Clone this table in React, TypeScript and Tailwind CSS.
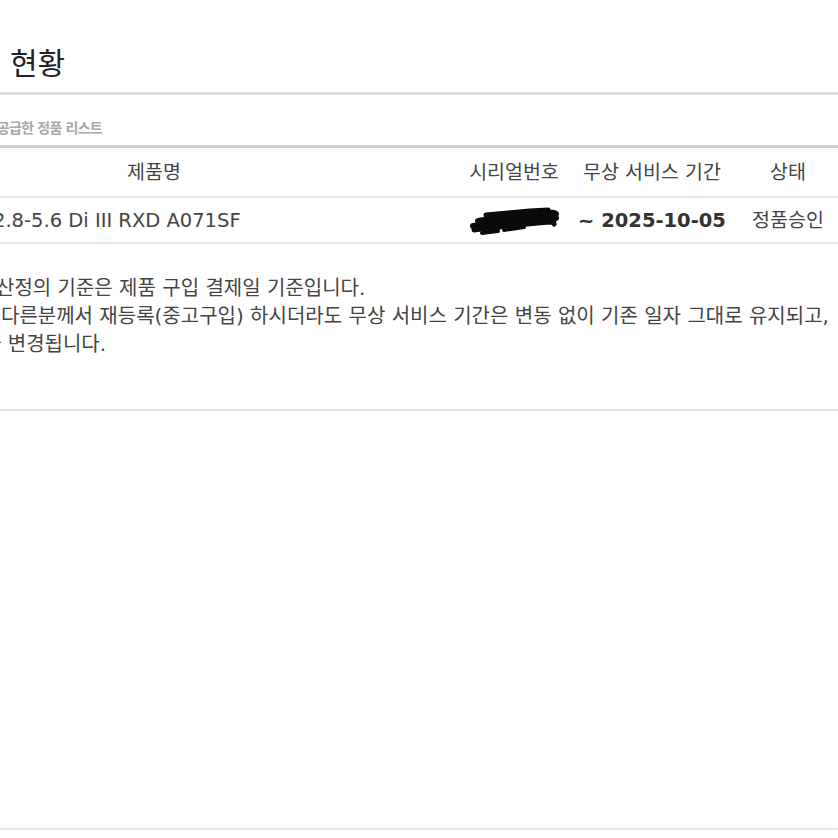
import React from "react";

const KR = { fontFamily: '"DejaVu Sans", "Noto Sans CJK KR", sans-serif' };

function Clipped({
  start,
  prefix,
  text,
  className = "",
}: {
  start: number;
  prefix: string;
  text: React.ReactNode;
  className?: string;
}) {
  const W = 400;
  return (
    <div className={"flex whitespace-nowrap " + className}>
      <span
        className="shrink-0 text-right overflow-hidden"
        style={{ width: W, marginLeft: start - W }}
      >
        {prefix}
      </span>
      <span>{text}</span>
    </div>
  );
}

function Scribble() {
  return (
    <svg width="92" height="32" viewBox="0 0 92 32" className="block">
      <g stroke="#0a0a0a" strokeLinecap="round" fill="none">
        <path d="M18 10 L 40 8 L 62 6 L 80 5" strokeWidth="5" />
        <path d="M10 16 C 28 13, 50 11, 70 9 S 86 8, 88 9" strokeWidth="6" />
        <path d="M5 21 C 24 18, 46 15, 68 14 S 84 12, 88 13" strokeWidth="6" />
        <path d="M6 25 C 26 22, 48 20, 70 18 S 84 17, 86 19" strokeWidth="5" />
        <path d="M14 28 L 30 26 M 36 25 L 56 22" strokeWidth="4" />
        <path d="M8 22 L 20 12 M 30 24 L 42 10 M 54 21 L 66 8 M 72 18 L 82 7" strokeWidth="3" />
      </g>
    </svg>
  );
}

export default function App() {
  return (
    <div
      className="w-[838px] h-[838px] overflow-hidden bg-white text-[#333]"
      style={KR}
    >
      <div className="h-[92px] pt-[43px]">
        <Clipped
          start={-6}
          prefix="정품 등록"
          text={<span className="ml-[16px]">현황</span>}
          className="text-[30px] leading-[42px] text-[#222]"
        />
      </div>
      <div className="h-[3px] bg-[#dedede]" />
      <div className="h-[50px] pt-[23px]">
        <Clipped
          start={-3}
          prefix="정식 수입원에서"
          text="공급한 정품 리스트"
          className="text-[14px] leading-[20px] font-bold text-[#a8a8a8] tracking-[-0.8px]"
        />
      </div>
      <div className="h-[3px] bg-[#cccccc]" />

      {/* table */}
      <div className="-ml-[146px] w-[992px]">
        <div className="grid grid-cols-[600px_120px_156px_116px] h-[50px] items-center pt-[2px] border-b-2 border-[#e8e8e8] text-[19.5px] text-[#444]">
          <div className="text-center">제품명</div>
          <div className="text-center whitespace-nowrap">시리얼번호</div>
          <div className="text-center whitespace-nowrap">무상 서비스 기간</div>
          <div className="text-center">상태</div>
        </div>
        <div className="grid grid-cols-[600px_120px_156px_116px] h-[46px] items-center pt-[2px] border-b-2 border-[#e8e8e8] text-[19.5px] text-[#444]">
          <div className="whitespace-nowrap">
            <Clipped
              start={139}
              prefix="28-200mm F/"
              text="2.8-5.6 Di III RXD A071SF"
            />
          </div>
          <div className="flex justify-center">
            <Scribble />
          </div>
          <div className="text-center font-bold text-[#333] whitespace-nowrap">
            ~ 2025-10-05
          </div>
          <div className="text-center whitespace-nowrap">정품승인</div>
        </div>
      </div>

      <div className="pt-[30px] pb-[51px] border-b-2 border-[#e4e4e4] text-[20px] leading-[28px] text-[#444]">
        <Clipped start={-4} prefix="※ 무상 서비스 기간" text="산정의 기준은 제품 구입 결제일 기준입니다." />
        <Clipped start={1} prefix="※ 구입하신 제품을" text="다른분께서 재등록(중고구입) 하시더라도 무상 서비스 기간은 변동 없이 기존 일자 그대로 유지되고," />
        <Clipped start={-17} prefix="소유자" text="가 변경됩니다." />
      </div>

      <div className="h-[417px]" />
      <div className="h-[2px] bg-[#e6e6e6] shadow-[0_-2px_3px_rgba(0,0,0,0.03)]" />
    </div>
  );
}
